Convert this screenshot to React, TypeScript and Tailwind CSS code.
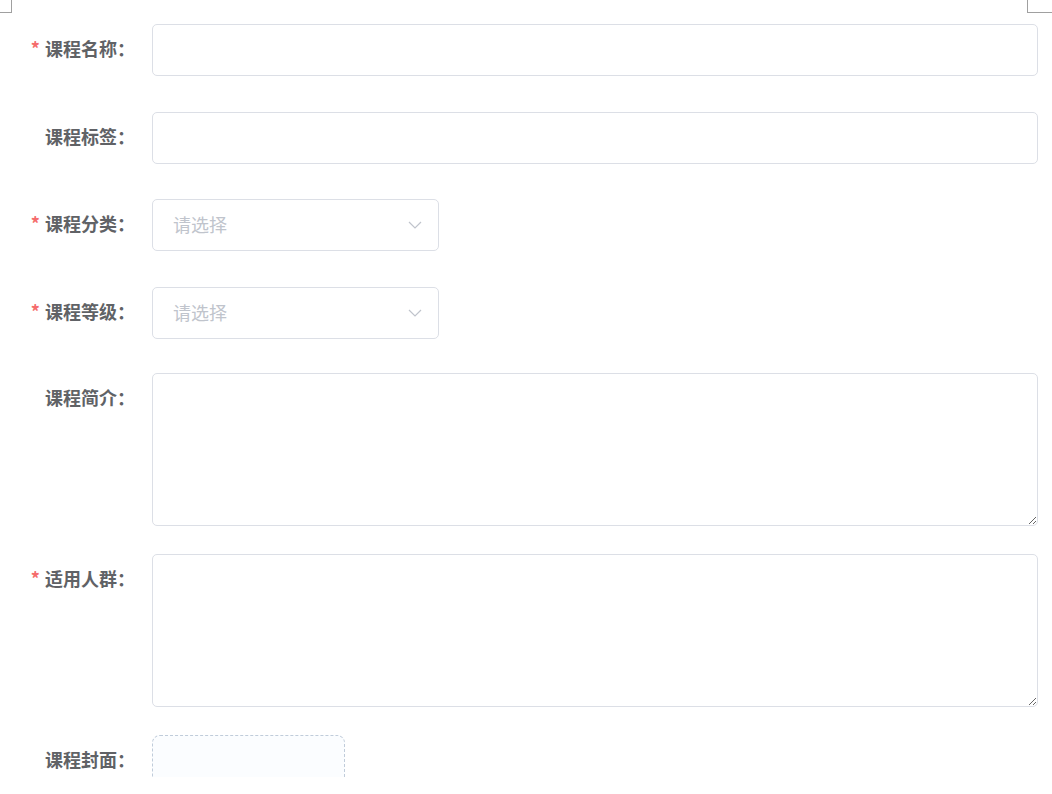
import React from 'react';

const font = { fontFamily: '"Noto Sans CJK SC", "Noto Sans", sans-serif' };

const Label = ({ text, required }: { text: string; required?: boolean }) => (
  <label className="w-[152px] shrink-0 pr-[17px] text-right text-[18px] font-bold leading-[48px] text-[#606266]">
    {required && <span className="mr-[5px] text-[#f56c6c]">*</span>}
    {text}：
  </label>
);

const Chevron = () => (
  <svg width="14" height="8" viewBox="0 0 14 8" fill="none" className="text-[#c0c4cc]">
    <path d="M1 1l6 6 6-6" stroke="currentColor" strokeWidth="1.2" />
  </svg>
);

const SelectBox = () => (
  <div className="flex h-[52px] w-[287px] items-center justify-between rounded-[5px] border border-[#dcdfe6] bg-white pl-[20px] pr-[16px]">
    <span className="-mt-[2px] text-[18px] text-[#c0c4cc]">请选择</span>
    <Chevron />
  </div>
);

const App = () => {
  return (
    <div className="relative h-[794px] overflow-hidden bg-white" style={font}>
      {/* page corner marks */}
      <div className="absolute left-0 top-0 h-[13px] w-[12px] border-b border-r border-[#a0a0a0]" />
      <div className="absolute left-[1027px] top-0 h-[13px] w-[25px] border-b border-l border-[#a0a0a0]" />

      <div className="h-[777px] overflow-hidden pr-[14px] pt-[24px]">
        <div className="mb-[36px] flex">
          <Label text="课程名称" required />
          <input className="h-[52px] flex-1 rounded-[5px] border border-[#dcdfe6] px-[20px] text-[18px] outline-none" />
        </div>

        <div className="mb-[35px] flex">
          <Label text="课程标签" />
          <input className="h-[52px] flex-1 rounded-[5px] border border-[#dcdfe6] px-[20px] text-[18px] outline-none" />
        </div>

        <div className="mb-[36px] flex">
          <Label text="课程分类" required />
          <SelectBox />
        </div>

        <div className="mb-[34px] flex">
          <Label text="课程等级" required />
          <SelectBox />
        </div>

        <div className="mb-[28px] flex">
          <Label text="课程简介" />
          <textarea className="block h-[153px] flex-1 rounded-[5px] border border-[#dcdfe6] px-[20px] py-[6px] text-[18px] outline-none" />
        </div>

        <div className="mb-[28px] flex">
          <Label text="适用人群" required />
          <textarea className="block h-[153px] flex-1 rounded-[5px] border border-[#dcdfe6] px-[20px] py-[6px] text-[18px] outline-none" />
        </div>

        <div className="flex">
          <Label text="课程封面" />
          <div className="h-[193px] w-[193px] rounded-[8px] border border-dashed border-[#c0ccda] bg-[#fbfdff]" />
        </div>
      </div>
    </div>
  );
};

export default App;
